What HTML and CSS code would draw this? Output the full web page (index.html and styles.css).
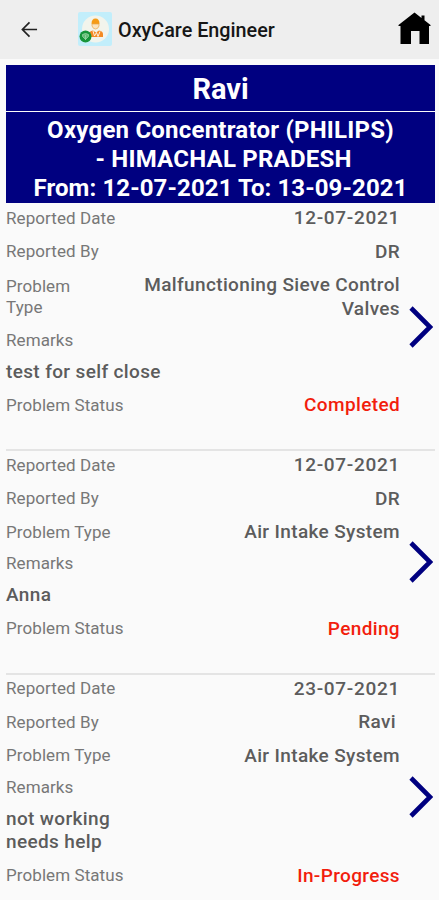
FILE: index.html
```html
<!DOCTYPE html>
<html lang="en">
<head>
<meta charset="utf-8">
<title>OxyCare Engineer</title>
<link rel="stylesheet" href="styles.css">
</head>
<body>
<header class="appbar">
  <svg class="back" viewBox="0 0 18 18"><path d="M17 9H2M9 1.500 1.500 9 9 16.500"/></svg>
  <svg class="logo" viewBox="0 0 34 34">
    <rect width="34" height="34" rx="2" fill="#c2eefb"/>
    <circle cx="17.500" cy="17" r="13.500" fill="#f2f4ec"/>
    <path d="M13.500 12q0-5.500 4-5.500t4 5.500z" fill="#f59b16"/>
    <path d="M14 12h7v2q-1 3-3.500 3t-3.500-3z" fill="#fbe3bd" stroke="#e8a64a" stroke-width=".7"/>
    <path d="M11 25v-3q0-3 4-3.500l3 2 3-2q4 .5 4 3.500v3z" fill="#f48a22"/>
    <path d="m15 19 1.500 5 2-3.500 1.500 4 2-5" fill="none" stroke="#fff0dc" stroke-width="1"/>
    <circle cx="7.500" cy="24.500" r="6" fill="#16953a"/>
    <path d="M4.500 22.500q3-2 6 0v2l-3 3-3-3zM7.500 23v5" fill="#64be78" stroke="#a0d9aa" stroke-width=".7"/>
  </svg>
  <h1 class="title">OxyCare Engineer</h1>
  <svg class="home" viewBox="0 0 34 34"><path d="M17.500 1.500 24.500 7V4.500h3V9.300L33.500 14v1H32v18H22.500V20h-8.500v13H3.500V15H1.500v-1z"/></svg>
</header>
<main class="content">
  <section class="banner">
    <h2 class="name">Ravi</h2>
    <p class="summary">Oxygen Concentrator (PHILIPS)<br><span class="region">- HIMACHAL PRADESH</span><br><span class="dates">From: 12-07-2021 To: 13-09-2021</span></p>
  </section>
  <article class="record first">
    <dl class="fields">
      <div class="row"><dt>Reported Date</dt><dd class="date">12-07-2021</dd></div>
      <div class="row"><dt>Reported By</dt><dd>DR</dd></div>
      <div class="row"><dt class="narrow">Problem Type</dt><dd>Malfunctioning Sieve Control Valves</dd></div>
      <div class="remarks"><dt>Remarks</dt><dd>test for self close</dd></div>
      <div class="row"><dt>Problem Status</dt><dd class="status">Completed</dd></div>
    </dl>
    <svg class="chevron" viewBox="0 0 24 42"><path d="m2 2 19 19L2 40"/></svg>
  </article>
  <article class="record">
    <dl class="fields">
      <div class="row"><dt>Reported Date</dt><dd class="date">12-07-2021</dd></div>
      <div class="row"><dt>Reported By</dt><dd>DR</dd></div>
      <div class="row"><dt>Problem Type</dt><dd>Air Intake System</dd></div>
      <div class="remarks"><dt>Remarks</dt><dd>Anna</dd></div>
      <div class="row"><dt>Problem Status</dt><dd class="status">Pending</dd></div>
    </dl>
    <svg class="chevron" viewBox="0 0 24 42"><path d="m2 2 19 19L2 40"/></svg>
  </article>
  <article class="record last">
    <dl class="fields">
      <div class="row"><dt>Reported Date</dt><dd class="date">23-07-2021</dd></div>
      <div class="row"><dt>Reported By</dt><dd class="spaced">Ravi</dd></div>
      <div class="row"><dt>Problem Type</dt><dd>Air Intake System</dd></div>
      <div class="remarks"><dt>Remarks</dt><dd>not working<br>needs help</dd></div>
      <div class="row"><dt>Problem Status</dt><dd class="status">In-Progress</dd></div>
    </dl>
    <svg class="chevron" viewBox="0 0 24 42"><path d="m2 2 19 19L2 40"/></svg>
  </article>
</main>
</body>
</html>
```
FILE: styles.css
```css
* { box-sizing: border-box; }
body {
  margin: 0;
  height: 900px;
  overflow: hidden;
  background: #fafafa;
  font-family: Roboto, "Liberation Sans", sans-serif;
}
h1, h2, p, dl, dd { margin: 0; }
.appbar {
  display: flex;
  align-items: center;
  height: 59px;
  padding: 0 8px 0 21px;
  background: #eee;
}
.back { width: 17px; height: 17px; fill: none; stroke: #222; stroke-width: 1.8; }
.logo { width: 34px; height: 34px; margin: -1px 0 0 40px; }
.title { margin: 1px 0 0 6px; font-size: 19.800px; font-weight: 500; color: #161616; }
.home { width: 34px; height: 34px; margin: -3px 0 0 auto; }
.content { padding: 6px 5px 0 6px; }
.banner {
  width: 429px;
  color: #fff;
  text-align: center;
  font-weight: 700;
}
.name {
  height: 46px;
  line-height: 49px;
  font-size: 29px;
  background: #000080;
}
.summary {
  height: 91px;
  margin-top: 1px;
  padding-top: 4px;
  font-size: 24px;
  line-height: 29px;
  letter-spacing: .22px;
  background: #000080;
}
.region { padding-left: 6px; }
.dates { letter-spacing: .1px; }
.record {
  display: flex;
  align-items: center;
  width: 429px;
  height: 224px;
  border-top: 2px solid #e4e4e4;
}
.record.first { height: 246px; border-top: 0; }
.record.last { height: 246px; }
.fields { width: 394px; align-self: flex-start; margin-top: -3px; }
.record.first .fields { margin-top: -2px; }
.record.last .fields { margin-top: -3.500px; }
.row {
  display: flex;
  align-items: center;
  justify-content: space-between;
  padding: 5px 0;
}
dt {
  font-size: 17px;
  line-height: 20.500px;
  letter-spacing: .08px;
  color: #777;
}
.narrow { width: 80px; }
dd {
  font-size: 19px;
  font-weight: 500;
  line-height: 23.500px;
  letter-spacing: .36px;
  color: #5c5c5c;
}
.row dd { max-width: 270px; text-align: right; }
.row .date { letter-spacing: .7px; }
.remarks dt { padding: 4.500px 0; }
.remarks dd { padding: 5px 0; }
.row .status { color: #f21d0d; }
.row .spaced { padding-right: 4px; }
.chevron {
  width: 24px;
  height: 42px;
  margin-left: 9px;
  fill: none;
  stroke: #000080;
  stroke-width: 4.600;
}
.first .chevron { margin-top: 2px; }
```
